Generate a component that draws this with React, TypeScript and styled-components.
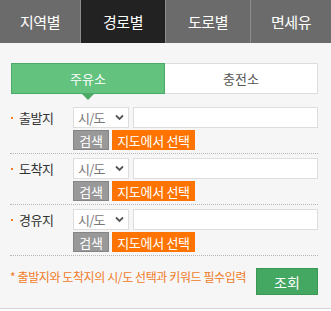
import React from "react";
import styled, { createGlobalStyle } from "styled-components";

const Global = createGlobalStyle`
  html, body { margin: 0; padding: 0; background: #ffffff; }
  body { font-family: "Noto Sans CJK KR", "Noto Sans", sans-serif; line-height: 1; }
  * { box-sizing: border-box; }
`;

const Wrap = styled.div`
  width: 331px;
  height: 309px;
  background: #f6f6f6;
  border-bottom: 1px solid #d6d6d6;
`;

const Nav = styled.div`
  display: flex;
  height: 43px;
  background: #6b6b6b;
`;

const NavTab = styled.div<{ $w: number; $active?: boolean; $first?: boolean }>`
  width: ${(p) => p.$w}px;
  flex-shrink: 0;
  display: flex;
  align-items: center;
  justify-content: center;
  background: ${(p) => (p.$active ? "#222222" : "#6b6b6b")};
  border-left: ${(p) => (p.$first ? "none" : "1px solid #8c8c8c")};
  color: #ffffff;
  font-size: 15px;
  letter-spacing: -0.5px;
`;

const Body = styled.div`
  padding: 20px 13px 0 10px;
`;

const SubTabs = styled.div`
  display: flex;
  height: 31px;
  margin-left: 1px;
`;

const SubTab = styled.div<{ $active?: boolean }>`
  position: relative;
  flex: 1;
  display: flex;
  align-items: center;
  justify-content: center;
  font-size: 13px;
  color: ${(p) => (p.$active ? "#ffffff" : "#555555")};
  background: ${(p) => (p.$active ? "#62c27e" : "#ffffff")};
  border: 1px solid ${(p) => (p.$active ? "#4caa67" : "#dddddd")};
  border-left: ${(p) => (p.$active ? "1px solid #4caa67" : "none")};
`;

const Pointer = styled.span`
  position: absolute;
  left: 50%;
  bottom: -7px;
  margin-left: -6px;
  width: 0;
  height: 0;
  border-left: 6px solid transparent;
  border-right: 6px solid transparent;
  border-top: 6px solid #4caa67;
`;

const Rows = styled.div`
  margin-top: 9px;
`;

const Row = styled.div`
  display: flex;
  padding: 4px 0 3px;
  border-bottom: 1px dotted #b5b5b5;
`;

const Label = styled.div`
  width: 63px;
  flex-shrink: 0;
  height: 21px;
  display: flex;
  align-items: center;
  font-size: 13px;
  color: #333333;
  letter-spacing: -0.5px;
  white-space: nowrap;
`;

const Dot = styled.span`
  display: inline-block;
  width: 2px;
  height: 2px;
  background: #f07a28;
  margin: 0 6px 0 1px;
`;

const Fields = styled.div`
  display: flex;
  flex-direction: column;
  gap: 2px;
`;

const Line = styled.div`
  display: flex;
  gap: 3px;
`;

const Select = styled.div`
  width: 56px;
  flex-shrink: 0;
  height: 21px;
  background: #ffffff;
  border: 1px solid #dddddd;
  display: flex;
  align-items: center;
  justify-content: space-between;
  padding: 0 4px 0 4px;
  font-size: 13px;
  letter-spacing: -0.8px;
  color: #777777;
  white-space: nowrap;
`;

const Input = styled.div`
  width: 185px;
  flex-shrink: 0;
  height: 21px;
  background: #ffffff;
  border: 1px solid #dddddd;
  margin-left: 1px;
`;

const Btn = styled.div<{ $kind: "grey" | "orange" }>`
  height: 20px;
  flex-shrink: 0;
  padding: 0;
  display: flex;
  align-items: center;
  justify-content: center;
  font-size: 13px;
  color: #ffffff;
  letter-spacing: -0.3px;
  white-space: nowrap;
  background: ${(p) => (p.$kind === "grey" ? "#999999" : "#ff7300")};
  border: 1px solid ${(p) => (p.$kind === "grey" ? "#858585" : "#ff7300")};
  width: ${(p) => (p.$kind === "grey" ? "36px" : "83px")};
`;

const Footer = styled.div`
  display: flex;
  align-items: flex-start;
  justify-content: space-between;
  padding-top: 12px;
`;

const Note = styled.div`
  font-size: 12px;
  color: #f07a28;
  letter-spacing: -0.4px;
  padding-top: 3px;
  white-space: nowrap;
`;

const Search = styled.div`
  width: 62px;
  flex-shrink: 0;
  height: 27px;
  background: #45a862;
  border: 1px solid #3c9656;
  color: #ffffff;
  font-size: 14px;
  display: flex;
  align-items: center;
  justify-content: center;
`;

const Chevron = () => (
  <svg width="9" height="7" viewBox="0 0 9 7">
    <path d="M1 1.5 L4.5 5 L8 1.5" fill="none" stroke="#555" strokeWidth="1.8" />
  </svg>
);

const rows = ["출발지", "도착지", "경유지"];

export default function App() {
  return (
    <>
      <Global />
      <Wrap>
        <Nav>
          <NavTab $w={80} $first>지역별</NavTab>
          <NavTab $w={85} $active>경로별</NavTab>
          <NavTab $w={85}>도로별</NavTab>
          <NavTab $w={81}>면세유</NavTab>
        </Nav>
        <Body>
          <SubTabs>
            <SubTab $active>
              주유소
              <Pointer />
            </SubTab>
            <SubTab>충전소</SubTab>
          </SubTabs>
          <Rows>
            {rows.map((r) => (
              <Row key={r}>
                <Label>
                  <Dot />
                  {r}
                </Label>
                <Fields>
                  <Line>
                    <Select>
                      시/도
                      <Chevron />
                    </Select>
                    <Input />
                  </Line>
                  <Line>
                    <Btn $kind="grey">검색</Btn>
                    <Btn $kind="orange">지도에서 선택</Btn>
                  </Line>
                </Fields>
              </Row>
            ))}
          </Rows>
          <Footer>
            <Note>* 출발지와 도착지의 시/도 선택과 키워드 필수입력</Note>
            <Search>조회</Search>
          </Footer>
        </Body>
      </Wrap>
    </>
  );
}
